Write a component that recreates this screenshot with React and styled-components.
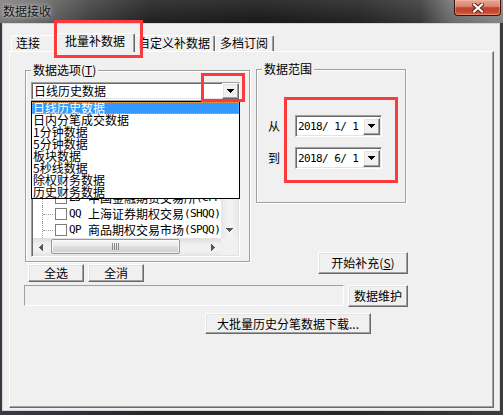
import React from "react";
import styled, { createGlobalStyle, css } from "styled-components";

const FONT = `"Noto Sans CJK SC", "Noto Sans", sans-serif`;
const MONO = `"DejaVu Sans Mono", "Liberation Mono", monospace`;

const GlobalStyle = createGlobalStyle`
  *, *::before, *::after { box-sizing: border-box; }
  html, body { margin: 0; padding: 0; background: #222226; }
  body { font-family: ${FONT}; font-size: 12px; color: #000; }
  #root { width: 503px; height: 415px; }
`;

const raised = css`
  border: 1px solid;
  border-color: #fff #696969 #696969 #fff;
  box-shadow: inset -1px -1px 0 #a0a0a0, inset 1px 1px 0 #e3e3e3;
`;

const sunken = css`
  border: 1px solid;
  border-color: #a0a0a0 #fff #fff #a0a0a0;
  box-shadow: inset 1px 1px 0 #696969, inset -1px -1px 0 #e3e3e3;
`;

const Window = styled.div`
  position: relative;
  width: 503px;
  height: 415px;
  display: flex;
  flex-direction: column;
  overflow: hidden;
  background: linear-gradient(90deg, #3a3a44 0%, #26262b 30%, #2b2729 70%, #3c3c40 100%);
`;

const TitleBar = styled.div`
  flex: none;
  height: 23px;
  display: flex;
  align-items: flex-start;
  justify-content: space-between;
  background:
    linear-gradient(180deg, rgba(255, 255, 255, 0.1), rgba(0, 0, 0, 0.06)),
    linear-gradient(90deg, #7f7f7f 0px, #6c6c6c 40px, #424242 90px, #222 150px, #1a1a1a 260px, #252525 360px, #3a3a3a 420px, #707070 450px, #8e8e8e 503px);
`;

const Title = styled.div`
  margin: 3px 0 0 3px;
  font-size: 12px;
  line-height: 16px;
  color: #141414;
  text-shadow: 0 0 6px rgba(255, 255, 255, 0.7), 0 0 3px rgba(255, 255, 255, 0.5);
`;

const CloseBtn = styled.div`
  width: 47px;
  height: 16px;
  margin-right: 2px;
  border: 1px solid #3e120b;
  border-top: none;
  border-radius: 0 0 4px 4px;
  background: linear-gradient(180deg, #e8a694 0%, #d98570 42%, #c4432a 52%, #c5482d 78%, #de6b47 100%);
  box-shadow: inset 0 0 0 1px rgba(255, 200, 180, 0.35);
  display: flex;
  align-items: center;
  justify-content: center;
`;

const Client = styled.div`
  flex: 1;
  margin: 0 3px 4px 2px;
  background: #f0f0f0;
  border: 1px solid #d6d6d6;
  padding: 9px 5px 2px 6px;
  display: flex;
  flex-direction: column;
`;

const TabStrip = styled.div`
  flex: none;
  height: 18px;
  display: flex;
  align-items: flex-end;
  padding-left: 2px;
`;

const Tab = styled.div`
  position: relative;
  flex: none;
  width: ${(p) => p.$w}px;
  height: ${(p) => (p.$active ? 19 : 16)}px;
  margin: 0 ${(p) => (p.$active ? -2 : 0)}px ${(p) => (p.$active ? -1 : 0)}px;
  padding: 0 0 0 ${(p) => (p.$active ? 7 : 4)}px;
  border: 1px solid;
  border-bottom: none;
  border-color: #fff #696969 transparent #fff;
  box-shadow: inset -1px 0 0 #a0a0a0;
  border-radius: 2px 2px 0 0;
  background: #f0f0f0;
  z-index: ${(p) => (p.$active ? 2 : 1)};
  font-size: 12px;
  line-height: 13px;
  white-space: nowrap;
`;

const Panel = styled.div`
  flex: 1;
  position: relative;
  border: 1px solid;
  border-color: #fff #696969 #696969 #fff;
  box-shadow: inset -1px -1px 0 #a0a0a0;
  padding: 11px 0 0 14px;
  display: flex;
  flex-direction: column;
  align-items: flex-start;
`;

const TopSection = styled.div`
  display: flex;
  align-items: flex-start;
`;

const LeftCol = styled.div`
  display: flex;
  flex-direction: column;
  margin-left: 1px;
`;

const RightCol = styled.div`
  display: flex;
  flex-direction: column;
  align-items: flex-start;
  margin: -1px 0 0 6px;
`;

const Group = styled.fieldset`
  margin: 0;
  min-width: 0;
  width: ${(p) => p.$w}px;
  height: ${(p) => p.$h}px;
  padding: ${(p) => p.$pad};
  border: 1px solid #a0a0a0;
  box-shadow: inset 1px 1px 0 #fff, 1px 1px 0 #fff;
`;

const Legend = styled.legend`
  position: relative;
  z-index: 1;
  margin: 0;
  padding: 0 2px;
  font-size: 12px;
  line-height: 14px;
  background: #f0f0f0;
`;

const ComboWrap = styled.div`
  position: relative;
  width: 209px;
`;

const Combo = styled.div`
  ${sunken};
  width: 209px;
  height: 18px;
  background: #fff;
  display: flex;
  align-items: stretch;
`;

const ComboText = styled.div`
  flex: 1;
  padding-left: 2px;
  font-size: 12px;
  line-height: 15px;
  white-space: nowrap;
`;

const DropBtn = styled.div`
  ${raised};
  flex: none;
  width: 17px;
  background: #f0f0f0;
  display: flex;
  align-items: center;
  justify-content: center;
`;

const DropList = styled.div`
  position: absolute;
  z-index: 5;
  top: 19px;
  left: 0;
  width: 209px;
  background: #fff;
  border: 1px solid #000;
`;

const DropItem = styled.div`
  height: 12px;
  padding-left: 1px;
  font-size: 12px;
  line-height: 12px;
  white-space: nowrap;
  color: ${(p) => (p.$sel ? "#fff" : "#000")};
  background: ${(p) => (p.$sel ? "#3399ff" : "transparent")};
  outline: ${(p) => (p.$sel ? "1px dotted #f0a050" : "none")};
  outline-offset: -1px;
`;

const Tree = styled.div`
  ${sunken};
  padding: 1px;
  width: 209px;
  height: 157px;
  background: #fff;
  display: grid;
  grid-template-columns: 1fr 17px;
  grid-template-rows: 1fr 17px;
`;

const TreeRows = styled.div`
  overflow: hidden;
  padding-top: 8px;
`;

const TreeRow = styled.div`
  height: 16px;
  display: flex;
  align-items: center;
  padding-left: 9px;
  white-space: nowrap;
  font-size: 12px;
  line-height: 16px;
`;

const Branch = styled.div`
  flex: none;
  align-self: stretch;
  width: 11px;
  border-left: 1px dotted #a0a0a0;
  display: flex;
  align-items: center;
  &::after {
    content: "";
    width: 10px;
    border-top: 1px dotted #a0a0a0;
  }
`;

const Check = styled.div`
  flex: none;
  width: 12px;
  height: 12px;
  margin-left: 2px;
  border: 1px solid #7c7c7c;
  background: #fff;
`;

const Latin = styled.span`
  flex: none;
  font-family: ${MONO};
  font-size: 11px;
  letter-spacing: -0.6px;
`;

const Code = styled(Latin)`
  width: 19px;
  margin-left: 2px;
`;

const VScroll = styled.div`
  display: flex;
  flex-direction: column;
  justify-content: space-between;
  background: linear-gradient(90deg, #e6e6e6, #f3f3f3 40%, #f3f3f3 60%, #e9e9e9);
`;

const HScroll = styled.div`
  display: flex;
  align-items: stretch;
  background: linear-gradient(180deg, #dedede, #efefef 30%, #f2f2f2 70%, #e6e6e6);
  border-top: 1px solid #e2e2e2;
`;

const ArrowCell = styled.div`
  flex: none;
  width: ${(p) => p.$w}px;
  height: ${(p) => p.$h}px;
  display: flex;
  align-items: center;
  justify-content: center;
`;

const HTrack = styled.div`
  flex: 1;
  display: flex;
  align-items: stretch;
  padding: 0 1px 1px 2px;
`;

const Thumb = styled.div`
  width: ${(p) => p.$w}px;
  border: 1px solid #979797;
  border-radius: 2px;
  background: linear-gradient(180deg, #f5f5f5 0%, #eaeaea 45%, #dcdcdc 55%, #d0d0d0 100%);
  box-shadow: inset 0 0 0 1px rgba(255, 255, 255, 0.7);
  display: flex;
  align-items: center;
  justify-content: center;
`;

const Corner = styled.div`
  background: #f0f0f0;
`;

const ButtonRow = styled.div`
  display: flex;
  gap: 4px;
  margin-top: 2px;
  padding-left: 3px;
`;

const Button = styled.div`
  ${raised};
  flex: none;
  width: ${(p) => p.$w}px;
  height: ${(p) => p.$h}px;
  background: #f0f0f0;
  display: flex;
  align-items: center;
  justify-content: center;
  font-size: 12px;
  line-height: 14px;
  white-space: nowrap;
`;

const StartButton = styled(Button)`
  margin: 49px 0 0 62px;
`;

const DateRow = styled.div`
  display: flex;
  align-items: center;
  padding-left: 6px;
  margin-bottom: 10px;
`;

const DateLabel = styled.div`
  width: 27px;
  font-size: 12px;
  line-height: 14px;
`;

const Picker = styled.div`
  ${sunken};
  width: 87px;
  height: 22px;
  padding: 1px;
  background: #fff;
  display: flex;
  align-items: center;
`;

const PickerText = styled.div`
  flex: 1;
  padding-left: 1px;
  font-family: ${MONO};
  font-size: 11px;
  letter-spacing: -0.6px;
  white-space: pre;
`;

const PickerBtn = styled(DropBtn)`
  width: 17px;
  height: 17px;
`;

const StatusRow = styled.div`
  display: flex;
  gap: 4px;
  margin-top: 3px;
`;

const ProgressBox = styled.div`
  width: 320px;
  height: 21px;
  border: 1px solid;
  border-color: #a0a0a0 #fff #fff #a0a0a0;
  background: #f0f0f0;
`;

const BulkRow = styled.div`
  margin-top: 6px;
  padding-left: 181px;
`;

const RedBox = styled.div`
  position: absolute;
  z-index: 20;
  left: ${(p) => p.$x}px;
  top: ${(p) => p.$y}px;
  width: ${(p) => p.$w}px;
  height: ${(p) => p.$h}px;
  border: 3px solid #fb3b3b;
  pointer-events: none;
`;

const TriDown = ({ color = "#000" }) => (
  <svg width="7" height="4" viewBox="0 0 7 4" shapeRendering="crispEdges">
    <path d="M0 0H7V1H6V2H5V3H4V4H3V3H2V2H1V1H0Z" fill={color} />
  </svg>
);

const TriUp = () => (
  <svg width="7" height="4" viewBox="0 0 7 4" shapeRendering="crispEdges">
    <path d="M3 0H4V1H5V2H6V3H7V4H0V3H1V2H2V1H3Z" fill="#555" />
  </svg>
);

const TriLeft = () => (
  <svg width="4" height="7" viewBox="0 0 4 7" shapeRendering="crispEdges">
    <path d="M3 0H4V7H3V6H2V5H1V4H0V3H1V2H2V1H3Z" fill="#555" />
  </svg>
);

const TriRight = () => (
  <svg width="4" height="7" viewBox="0 0 4 7" shapeRendering="crispEdges">
    <path d="M0 0H1V1H2V2H3V3H4V4H3V5H2V6H1V7H0Z" fill="#555" />
  </svg>
);

const Grip = () => (
  <svg width="7" height="7" viewBox="0 0 7 7" shapeRendering="crispEdges">
    <path d="M0 0H1V7H0ZM2 0H3V7H2ZM4 0H5V7H4ZM6 0H7V7H6Z" fill="#8a8a8a" />
  </svg>
);

const CloseGlyph = () => (
  <svg width="12" height="10" viewBox="0 0 12 10">
    <path d="M2 1.5L10 8.5M10 1.5L2 8.5" stroke="#5a1c12" strokeWidth="4" strokeLinecap="square" />
    <path d="M2 1.5L10 8.5M10 1.5L2 8.5" stroke="#fff" strokeWidth="2.2" strokeLinecap="square" />
  </svg>
);

const listItems = [
  "日线历史数据",
  "日内分笔成交数据",
  "1分钟数据",
  "5分钟数据",
  "板块数据",
  "5秒线数据",
  "除权财务数据",
  "历史财务数据",
];

const markets = [
  ["SZ", "深圳证券交易所", "(SZ)"],
  ["SH", "上海证券交易所", "(SH)"],
  ["DL", "大连商品期货交易所", "(DCE)"],
  ["ZZ", "郑州商品期货交易所", "(CZCE)"],
  ["SQ", "上海期货交易所", "(SHFE)"],
  ["ZJ", "中国金融期货交易所", "(CFFEX)"],
  ["QQ", "上海证券期权交易", "(SHQQ)"],
  ["QP", "商品期权交易市场", "(SPQQ)"],
  ["QS", "深圳证券期权交易", "(SZQQ)"],
];

export default function App() {
  return (
    <>
      <GlobalStyle />
      <Window>
        <TitleBar>
          <Title>数据接收</Title>
          <CloseBtn>
            <CloseGlyph />
          </CloseBtn>
        </TitleBar>
        <Client>
          <TabStrip>
            <Tab $w={48}>连接</Tab>
            <Tab $w={78} $active>
              批量补数据
            </Tab>
            <Tab $w={82}>自定义补数据</Tab>
            <Tab $w={59}>多档订阅</Tab>
          </TabStrip>
          <Panel>
            <TopSection>
              <LeftCol>
                <Group $w={225} $h={199} $pad="5px 0 4px 5px">
                  <Legend>
                    数据选项(<u>T</u>)
                  </Legend>
                  <ComboWrap>
                    <Combo>
                      <ComboText>日线历史数据</ComboText>
                      <DropBtn>
                        <TriDown />
                      </DropBtn>
                    </Combo>
                    <DropList>
                      {listItems.map((t, i) => (
                        <DropItem key={t} $sel={i === 0}>
                          {t}
                        </DropItem>
                      ))}
                    </DropList>
                  </ComboWrap>
                  <Tree>
                    <TreeRows>
                      {markets.map(([c, n, l]) => (
                        <TreeRow key={c}>
                          <Branch />
                          <Check />
                          <Code>{c}</Code>
                          <span>{n}</span>
                          <Latin>{l}</Latin>
                        </TreeRow>
                      ))}
                    </TreeRows>
                    <VScroll>
                      <ArrowCell $w={17} $h={16}>
                        <TriUp />
                      </ArrowCell>
                      <ArrowCell $w={17} $h={16}>
                        <TriDown color="#555" />
                      </ArrowCell>
                    </VScroll>
                    <HScroll>
                      <ArrowCell $w={16} $h={16}>
                        <TriLeft />
                      </ArrowCell>
                      <HTrack>
                        <Thumb $w={129}>
                          <Grip />
                        </Thumb>
                      </HTrack>
                      <ArrowCell $w={16} $h={16}>
                        <TriRight />
                      </ArrowCell>
                    </HScroll>
                    <Corner />
                  </Tree>
                </Group>
                <ButtonRow>
                  <Button $w={56} $h={18}>全选</Button>
                  <Button $w={56} $h={18}>全消</Button>
                </ButtonRow>
              </LeftCol>
              <RightCol>
                <Group $w={150} $h={141} $pad="39px 0 0 5px">
                  <Legend>数据范围</Legend>
                  <DateRow>
                    <DateLabel>从</DateLabel>
                    <Picker>
                      <PickerText>2018/ 1/ 1</PickerText>
                      <PickerBtn>
                        <TriDown />
                      </PickerBtn>
                    </Picker>
                  </DateRow>
                  <DateRow>
                    <DateLabel>到</DateLabel>
                    <Picker>
                      <PickerText>2018/ 6/ 1</PickerText>
                      <PickerBtn>
                        <TriDown />
                      </PickerBtn>
                    </Picker>
                  </DateRow>
                </Group>
                <StartButton $w={90} $h={22}>
                  开始补充(<u>S</u>)
                </StartButton>
              </RightCol>
            </TopSection>
            <StatusRow>
              <ProgressBox />
              <Button $w={60} $h={22}>数据维护</Button>
            </StatusRow>
            <BulkRow>
              <Button $w={166} $h={21}>大批量历史分笔数据下载...</Button>
            </BulkRow>
          </Panel>
        </Client>
        <RedBox $x={54} $y={20} $w={89} $h={38} />
        <RedBox $x={201} $y={73} $w={44} $h={29} />
        <RedBox $x={284} $y={97} $w={114} $h={86} />
      </Window>
    </>
  );
}
